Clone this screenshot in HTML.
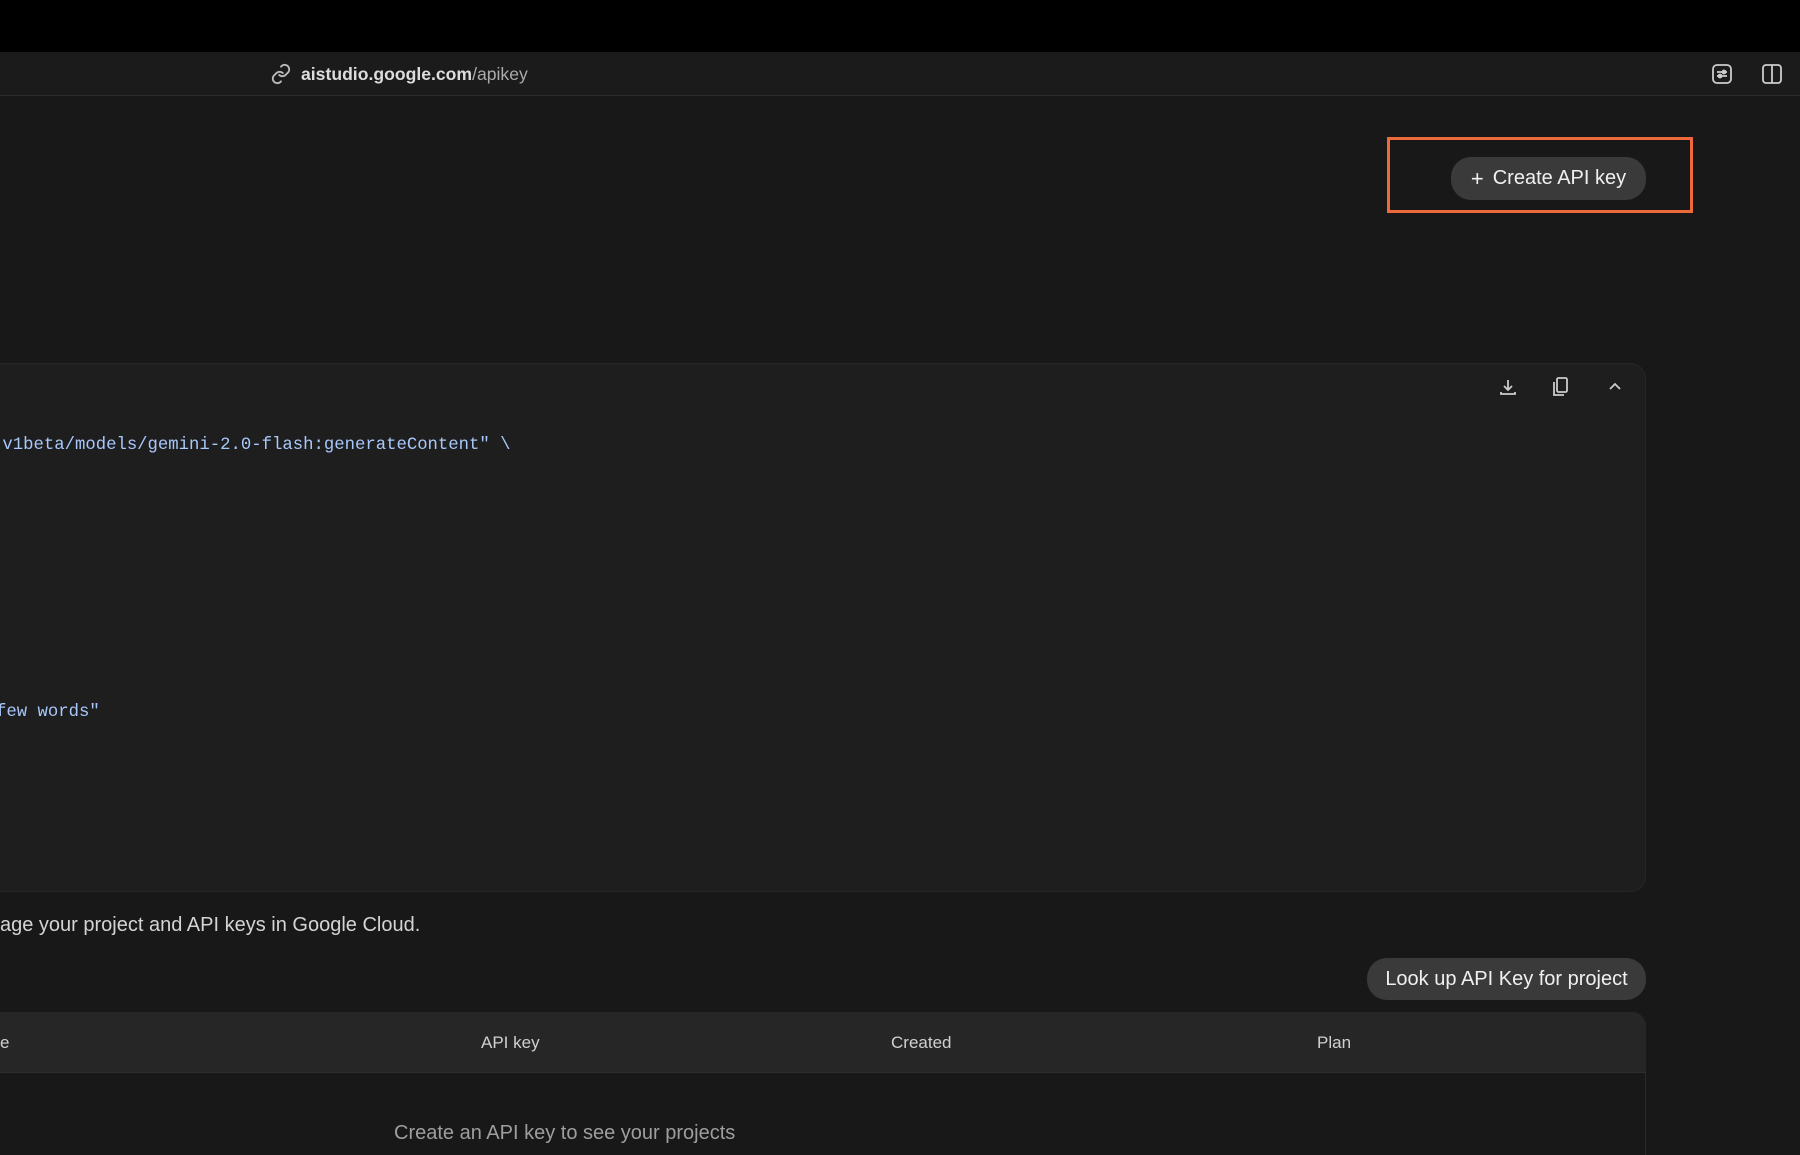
<!DOCTYPE html>
<html><head><meta charset="utf-8"><style>
*{margin:0;padding:0;box-sizing:border-box}
html{width:1800px;height:1155px;overflow:hidden}
body{width:1800px;height:1155px;background:#181818;position:relative;overflow:hidden;font-family:"Liberation Sans",sans-serif;color:#e3e3e3}
.a{position:absolute}
.mono{font-family:"Liberation Mono",monospace;font-size:17.3px;color:#a8c7fa;white-space:pre}
.btn{background:#3a3a3a;border-radius:20px;color:#f0f0f0;font-size:20px;display:flex;align-items:center;justify-content:center}
.th{font-size:17px;color:#d0d0d0;top:1033px}
</style></head><body>
<div class="a" style="left:0;top:0;width:1800px;height:52px;background:#000"></div>
<div class="a" style="left:0;top:52px;width:1800px;height:44px;background:#1b1b1b;border-bottom:1px solid #2c2c2c"></div>
<svg class="a" style="left:270px;top:63px" width="22" height="22" viewBox="0 0 24 24" fill="none" stroke="#bbb" stroke-width="2" stroke-linecap="round"><path d="M10 13a5 5 0 0 0 7 0l3-3a5 5 0 0 0-7-7l-1 1"/><path d="M14 11a5 5 0 0 0-7 0l-3 3a5 5 0 0 0 7 7l1-1"/></svg>
<div class="a" style="left:301px;top:64px;font-size:17.6px;color:#ddd"><b style="font-weight:600">aistudio.google.com</b><span style="color:#aaa">/apikey</span></div>
<svg class="a" style="left:1711px;top:63px" width="22" height="22" viewBox="0 0 22 22" fill="none" stroke="#ccc" stroke-width="1.8"><rect x="2" y="2" width="18" height="18" rx="4"/><path d="M6 9h10M6 13h10"/><circle cx="13" cy="9" r="1.5"/><circle cx="9" cy="13" r="1.5"/></svg>
<svg class="a" style="left:1761px;top:63px" width="22" height="22" viewBox="0 0 22 22" fill="none" stroke="#ccc" stroke-width="1.8"><rect x="2" y="2" width="18" height="18" rx="3"/><path d="M11 2v18"/></svg>
<div class="a" style="left:1387px;top:137px;width:306px;height:76px;border:3px solid #ee6a3c"></div>
<div class="a btn" style="left:1451px;top:157px;width:195px;height:43px"><span style="font-size:22px;margin-right:9px;font-weight:300">+</span>Create API key</div>
<div class="a" style="left:-20px;top:363px;width:1666px;height:529px;background:#1e1e1e;border-radius:16px;border:1px solid #262626"></div>
<svg class="a" style="left:1498px;top:377px" width="20" height="20" viewBox="0 0 20 20" fill="none" stroke="#ccc" stroke-width="1.8"><path d="M10 3v10M6 9l4 4 4-4M3 15v2h14v-2"/></svg>
<svg class="a" style="left:1551px;top:376px" width="20" height="22" viewBox="0 0 20 22" fill="none" stroke="#ccc" stroke-width="1.8"><rect x="6" y="2" width="10" height="14" rx="1.5"/><path d="M3 6v13h10"/></svg>
<svg class="a" style="left:1606px;top:379px" width="18" height="16" viewBox="0 0 18 16" fill="none" stroke="#ccc" stroke-width="1.8"><path d="M4 10l5-5 5 5"/></svg>
<div class="a mono" style="left:-8px;top:436px">"v1beta/models/gemini-2.0-flash:generateContent" \</div>
<div class="a mono" style="left:-4px;top:703px">few words"</div>
<div class="a" style="left:0;top:914px;font-size:20px;color:#d4d4d4">age your project and API keys in Google Cloud.</div>
<div class="a btn" style="left:1367px;top:958px;width:279px;height:42px">Look up API Key for project</div>
<div class="a" style="left:-20px;top:1012px;width:1666px;height:143px;border:1px solid #2a2a2a;border-bottom:none;border-radius:14px 14px 0 0;background:#181818"></div>
<div class="a" style="left:-20px;top:1012px;width:1666px;height:61px;background:#262626;border-radius:14px 14px 0 0;border-bottom:1px solid #2e2e2e"></div>
<div class="a th" style="left:0">e</div>
<div class="a th" style="left:481px">API key</div>
<div class="a th" style="left:891px">Created</div>
<div class="a th" style="left:1317px">Plan</div>
<div class="a" style="left:394px;top:1122px;font-size:20px;color:#9e9e9e">Create an API key to see your projects</div>
</body></html>
